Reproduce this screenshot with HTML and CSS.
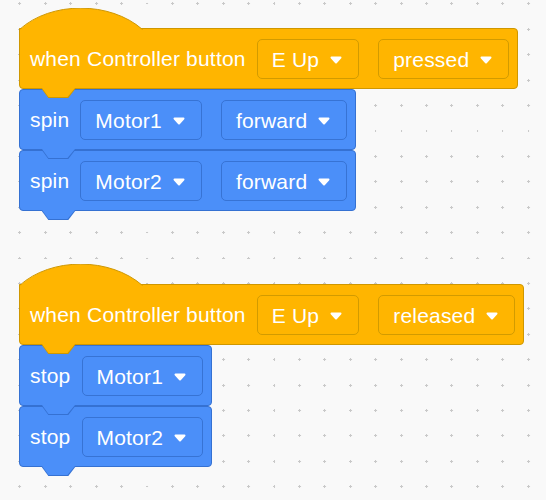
FILE: index.html
```html
<!DOCTYPE html>
<html lang="en">
<head>
    <meta charset="UTF-8">
    <meta name="viewport" content="width=device-width, initial-scale=1.0">
    <link rel="stylesheet" href="styles.css">
    <title>Controller blocks</title>
</head>
<body>
    <div class="workspace">

        <!-- Pila 1: botón pulsado -->
        <div class="stack">
            <div class="block hat">
                <svg class="hat-cap" width="124" height="22" viewBox="0 0 124 22">
                    <path class="cap-fill" d="M1 22 V21.5 C32 -7 91 -7 123.5 21.5 L124 22 Z"/>
                    <path class="cap-line" d="M0.5 21.5 C32 -7 91 -7 123.5 21.5"/>
                </svg>
                <span class="label">when Controller button</span>
                <span class="field">E Up <svg class="arrow" viewBox="0 0 12 8"><path d="M1.5 1.5 H10.5 L6 6.5 Z"/></svg></span>
                <span class="field">pressed <svg class="arrow" viewBox="0 0 12 8"><path d="M1.5 1.5 H10.5 L6 6.5 Z"/></svg></span>
            </div>
            <div class="block motion">
                <span class="label">spin</span>
                <span class="field">Motor1 <svg class="arrow" viewBox="0 0 12 8"><path d="M1.5 1.5 H10.5 L6 6.5 Z"/></svg></span>
                <span class="field">forward <svg class="arrow" viewBox="0 0 12 8"><path d="M1.5 1.5 H10.5 L6 6.5 Z"/></svg></span>
            </div>
            <div class="block motion">
                <span class="label">spin</span>
                <span class="field">Motor2 <svg class="arrow" viewBox="0 0 12 8"><path d="M1.5 1.5 H10.5 L6 6.5 Z"/></svg></span>
                <span class="field">forward <svg class="arrow" viewBox="0 0 12 8"><path d="M1.5 1.5 H10.5 L6 6.5 Z"/></svg></span>
            </div>
        </div>

        <!-- Pila 2: botón soltado -->
        <div class="stack">
            <div class="block hat">
                <svg class="hat-cap" width="124" height="22" viewBox="0 0 124 22">
                    <path class="cap-fill" d="M1 22 V21.5 C32 -7 91 -7 123.5 21.5 L124 22 Z"/>
                    <path class="cap-line" d="M0.5 21.5 C32 -7 91 -7 123.5 21.5"/>
                </svg>
                <span class="label">when Controller button</span>
                <span class="field">E Up <svg class="arrow" viewBox="0 0 12 8"><path d="M1.5 1.5 H10.5 L6 6.5 Z"/></svg></span>
                <span class="field">released <svg class="arrow" viewBox="0 0 12 8"><path d="M1.5 1.5 H10.5 L6 6.5 Z"/></svg></span>
            </div>
            <div class="block motion">
                <span class="label">stop</span>
                <span class="field">Motor1 <svg class="arrow" viewBox="0 0 12 8"><path d="M1.5 1.5 H10.5 L6 6.5 Z"/></svg></span>
            </div>
            <div class="block motion">
                <span class="label">stop</span>
                <span class="field">Motor2 <svg class="arrow" viewBox="0 0 12 8"><path d="M1.5 1.5 H10.5 L6 6.5 Z"/></svg></span>
            </div>
        </div>

    </div>
</body>
</html>
```

FILE: styles.css
```css
html, body {
    margin: 0;
    padding: 0;
    height: 100%;
}

body {
    font-family: 'Liberation Sans', Arial, sans-serif;
    background-color: #f9f9f9;
    /* cuadrícula de cruces del área de trabajo */
    background-image: url("data:image/svg+xml,%3Csvg xmlns='http://www.w3.org/2000/svg' width='25.42' height='25.42' viewBox='0 0 25.42 25.42'%3E%3Cpath d='M0 1.5H3M1.5 0V3' stroke='%23c9c9c9' stroke-width='1'/%3E%3C/svg%3E");
    background-size: 25.42px 25.42px;
    background-position: 18.5px 2.5px;
    overflow: hidden;
}

.workspace {
    padding: 28px 0 0 19px;
    display: flex;
    flex-direction: column;
    align-items: flex-start;
    gap: 73px;
}

.stack {
    display: flex;
    flex-direction: column;
    align-items: flex-start;
}

/* Bloque base */
.block {
    position: relative;
    box-sizing: border-box;
    height: 61px;
    display: flex;
    align-items: center;
    padding: 1px 8px 0 10px;
    border: 1px solid;
    border-radius: 4px;
    color: white;
    font-size: 21px;
    letter-spacing: 0.2px;
    white-space: nowrap;
}

/* Pestaña inferior: borde + relleno */
.block::before,
.block::after {
    content: "";
    position: absolute;
    top: 100%;
    z-index: 1;
}

.block::before {
    left: 21px;
    width: 35px;
    height: 10px;
    clip-path: polygon(0 0, 100% 0, 78% 100%, 21% 100%);
}

.block::after {
    left: 22px;
    width: 33px;
    height: 9px;
    clip-path: polygon(0 0, 100% 0, calc(100% - 7.5px) 100%, 6.5px 100%);
}

.hat {
    background-color: #ffb500;
    border-color: #cf9700;
    border-top-left-radius: 0;
}

.hat::before {
    background-color: #cf9700;
}

.hat::after {
    background-color: #ffb500;
}

.motion {
    background-color: #4b8ff9;
    border-color: #3571d2;
}

.motion::before {
    background-color: #3571d2;
}

.motion::after {
    background-color: #4b8ff9;
}

.hat-cap {
    position: absolute;
    left: -1px;
    bottom: calc(100% - 1px);
    display: block;
}

.cap-fill {
    fill: #ffb500;
}

.cap-line {
    fill: none;
    stroke: #cf9700;
    stroke-width: 1;
}

.label {
    margin-right: 11px;
}

/* Desplegables */
.field {
    box-sizing: border-box;
    height: 40px;
    display: inline-flex;
    align-items: center;
    gap: 11px;
    padding: 1px 16px 0 14px;
    border: 1px solid;
    border-radius: 5px;
}

.field + .field {
    margin-left: 19px;
}

.hat .field {
    border-color: #d29b00;
}

.motion .field {
    border-color: #3773d4;
}

.arrow {
    width: 12px;
    height: 8px;
}

.arrow path {
    fill: white;
    stroke: white;
    stroke-width: 2;
    stroke-linejoin: round;
}
```
